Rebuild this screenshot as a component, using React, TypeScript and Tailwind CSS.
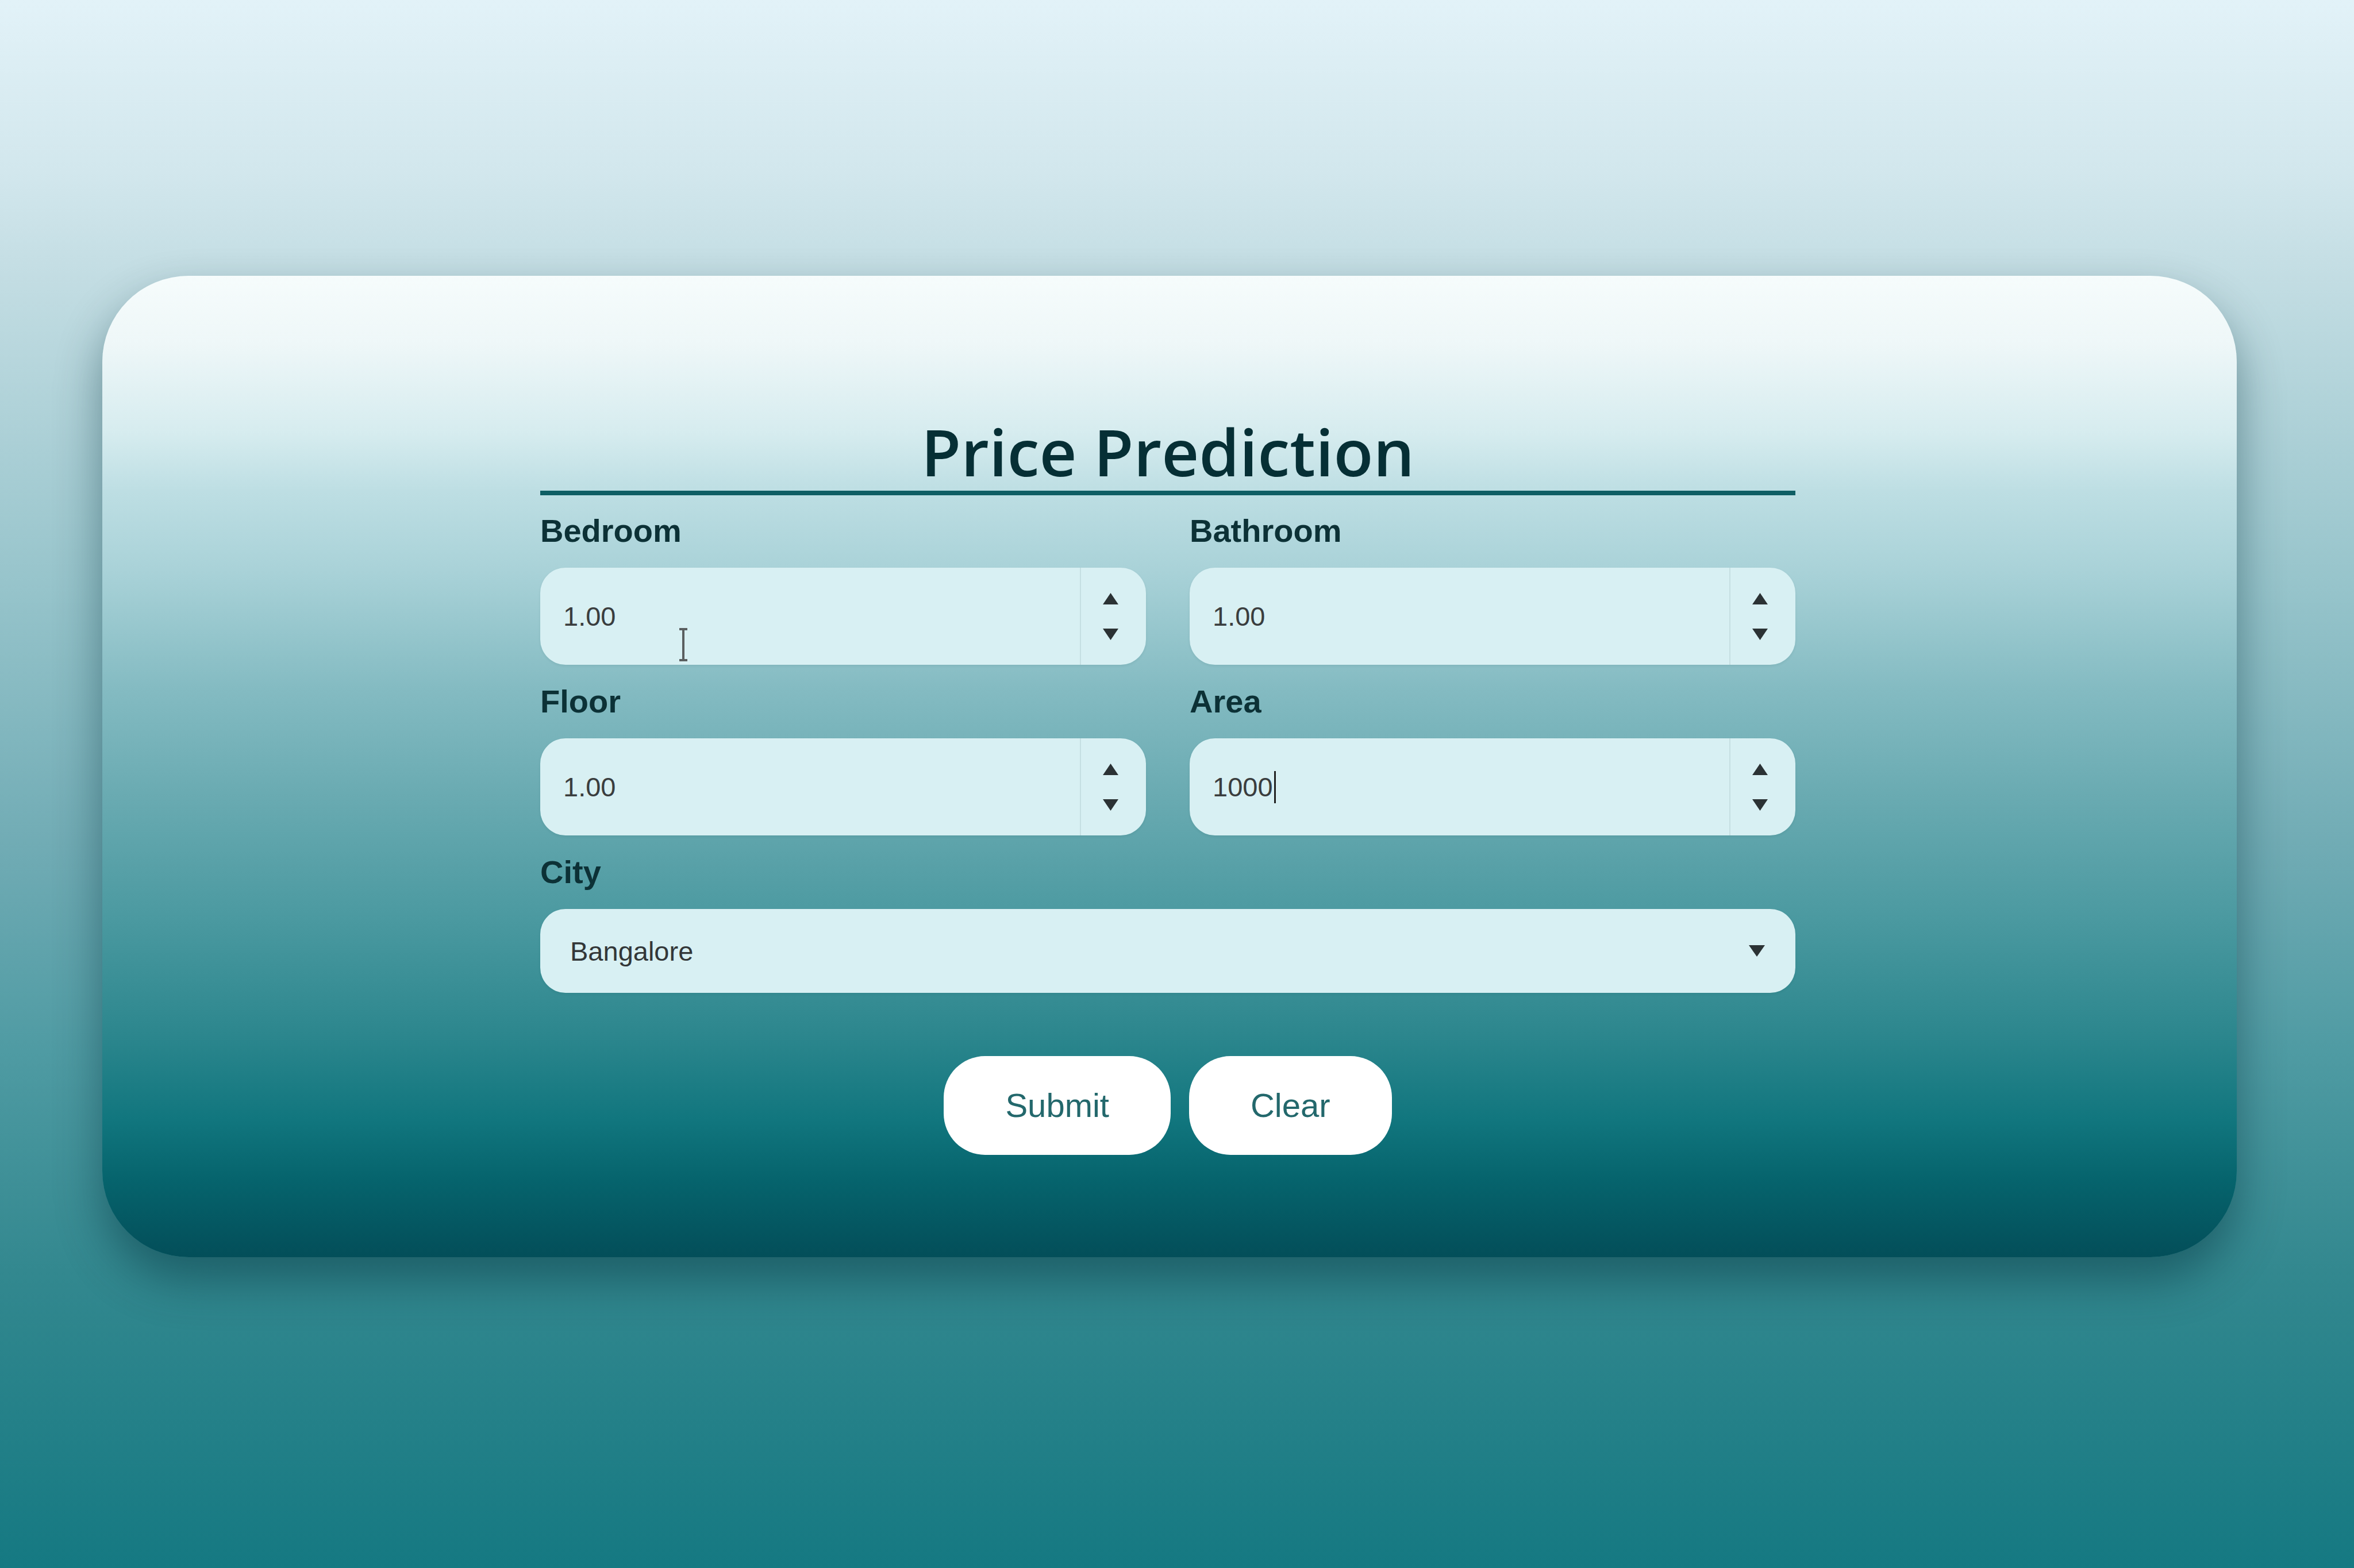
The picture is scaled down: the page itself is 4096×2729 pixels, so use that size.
import React from "react";

const Up = () => (
  <svg width="27" height="20" viewBox="0 0 27 20"><path d="M13.5 0 L27 20 L0 20 Z" fill="#2b3234" /></svg>
);
const Down = () => (
  <svg width="27" height="20" viewBox="0 0 27 20"><path d="M0 0 L27 0 L13.5 20 Z" fill="#2b3234" /></svg>
);

function NumField({ label, value, ibeam, caret }: { label: string; value: string; ibeam?: boolean; caret?: boolean }) {
  return (
    <div className="flex flex-col gap-[36px]">
      <div className="text-[56px] leading-none font-bold text-[#0c3136] font-['Liberation_Sans',Arial,sans-serif] h-[56px]">{label}</div>
      <div className="relative h-[169px] rounded-[44px] bg-[#d8f0f3] flex items-center shadow-[0_2px_4px_rgba(0,60,70,0.08)]">
        <div className="flex-1 pl-[40px] flex items-center text-[47px] leading-none text-[#3a3d3e] font-['Liberation_Sans',Arial,sans-serif]">
          <span>{value}</span>
          {caret && <span className="ml-[2px] w-[3px] h-[56px] bg-[#222]" />}
        </div>
        {ibeam && (
          <svg className="absolute left-[239px] top-[105px]" width="20" height="58" viewBox="0 0 20 58">
            <path d="M3 2 H17 M10 2 V56 M3 56 H17" stroke="#5a5f60" strokeWidth="4" fill="none" />
          </svg>
        )}
        <div className="w-[115px] self-stretch border-l-2 border-[#c5dfe2] flex flex-col items-center justify-center gap-[42px] pr-[10px]">
          <Up />
          <Down />
        </div>
      </div>
    </div>
  );
}

export default function App() {
  return (
    <div className="w-[4096px] h-[2729px] overflow-hidden bg-[linear-gradient(180deg,#e2f2f8_0%,#d2e7ed_11%,#c3dde3_17.5%,#95c3ca_38%,#6eaab3_55%,#4f9ba3_67%,#33888f_81%,#157982_100%)] pt-[480px]">
      <div className="ml-[178px] w-[3714px] h-[1708px] rounded-[150px] bg-[linear-gradient(180deg,#f6fcfc_0%,#eef7f8_7%,#d6ecef_16%,#bddee3_22%,#a9d2d8_30%,#84bbc2_42%,#67a9b0_54%,#4c9aa1_65%,#2d878e_77%,#11767e_86%,#06646d_92%,#034e59_100%)] shadow-[0_40px_80px_rgba(0,45,55,0.45)] pt-[249px] pl-[762px]">
        <div className="w-[2184px] flex flex-col">
          <h1 className="text-center text-[113px] leading-none font-semibold text-[#062f35] font-['Open_Sans',sans-serif] pb-[12px] border-b-[8px] border-[#0f5e64]">
            Price Prediction
          </h1>
          <div className="mt-[34px] grid grid-cols-2 gap-x-[76px] gap-y-[36px]">
            <NumField label="Bedroom" value="1.00" ibeam />
            <NumField label="Bathroom" value="1.00" />
            <NumField label="Floor" value="1.00" />
            <NumField label="Area" value="1000" caret />
            <div className="col-span-2 flex flex-col gap-[36px]">
              <div className="text-[56px] leading-none font-bold text-[#0c3136] font-['Liberation_Sans',Arial,sans-serif] h-[56px]">City</div>
              <div className="h-[146px] rounded-[44px] bg-[#d8f0f3] flex items-center justify-between pl-[52px] pr-[53px] shadow-[0_2px_4px_rgba(0,60,70,0.08)]">
                <span className="text-[47px] leading-none text-[#333738] font-['Liberation_Sans',Arial,sans-serif]">Bangalore</span>
                <svg width="28" height="20" viewBox="0 0 28 20"><path d="M0 0 L28 0 L14 20 Z" fill="#2b3234" /></svg>
              </div>
            </div>
          </div>
          <div className="mt-[110px] flex justify-center gap-[32px]">
            <button className="h-[172px] px-[107px] rounded-[72px] bg-white text-[58px] leading-none text-[#23686c] font-['Liberation_Sans',Arial,sans-serif]">Submit</button>
            <button className="h-[172px] px-[107px] rounded-[72px] bg-white text-[58px] leading-none text-[#23686c] font-['Liberation_Sans',Arial,sans-serif]">Clear</button>
          </div>
        </div>
      </div>
    </div>
  );
}
